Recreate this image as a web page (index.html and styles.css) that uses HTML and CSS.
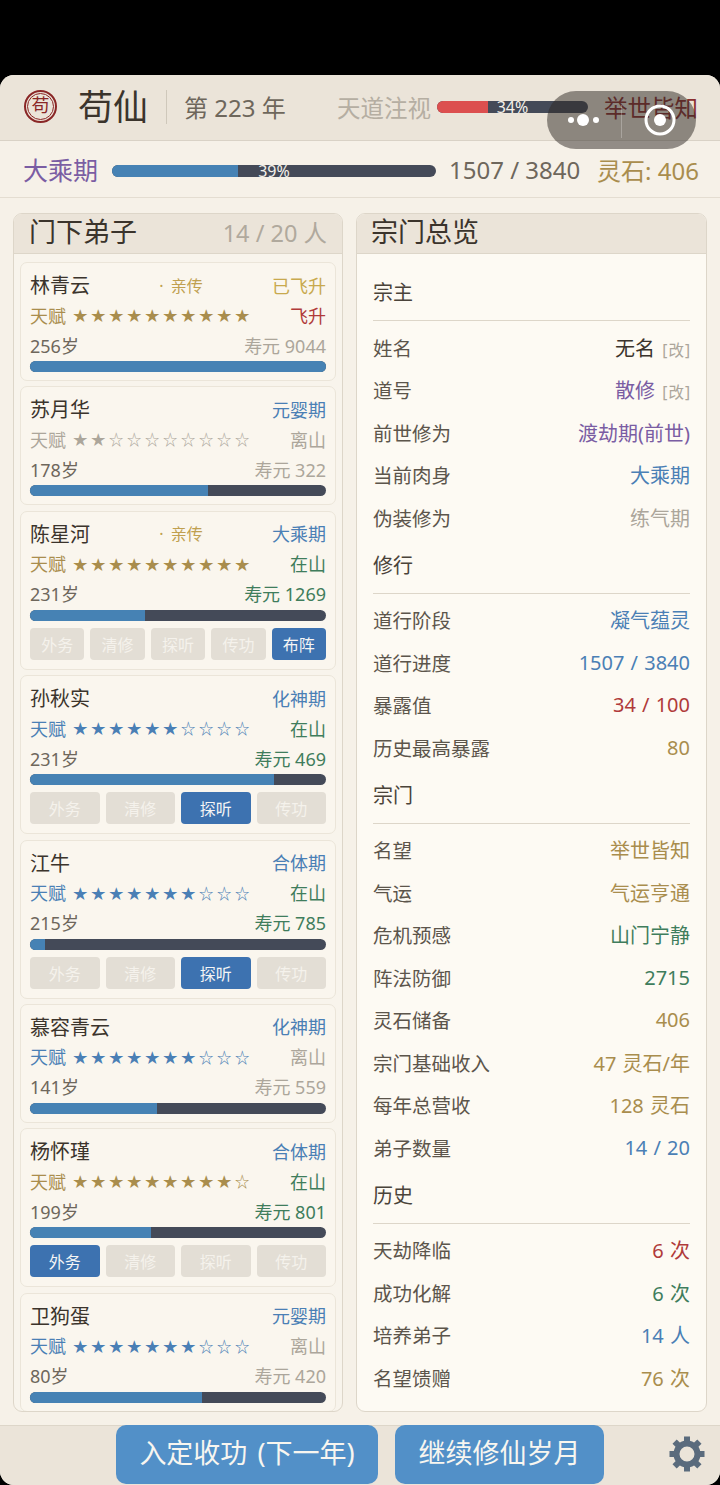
FILE: index.html
```html
<!DOCTYPE html>
<html lang="zh-CN">
<head>
  <meta charset="UTF-8" />
  <meta name="viewport" content="width=device-width, initial-scale=1" />
  <title>苟仙</title>
  <link rel="stylesheet" href="styles.css">
</head>
<body>
  <div class="app">
    <header class="topbar">
      <div class="seal"><span>苟</span></div>
      <div class="sect-name">苟仙</div>
      <div class="year">第 223 年</div>
      <div class="watch">天道注视</div>
      <div class="bar top-bar"><div class="fill red" style="width:34%"></div><span class="bar-text">34%</span></div>
      <div class="fame">举世皆知</div>
    </header>

    <section class="status">
      <div class="realm">大乘期</div>
      <div class="bar status-bar"><div class="fill" style="width:39%"></div><span class="bar-text">39%</span></div>
      <div class="exp">1507 / 3840</div>
      <div class="stones">灵石: 406</div>
    </section>

    <main class="columns">
      <section class="panel left-panel">
        <div class="panel-head">
          <h2>门下弟子</h2>
          <span class="count">14 / 20 人</span>
        </div>
        <div class="card-list">

          <div class="card">
            <div class="row name-row"><span class="name">林青云</span><span class="tag">· 亲传</span><span class="stage ascended">已飞升</span></div>
            <div class="row gift-row"><span class="gift gold">天赋<span class="stars">★★★★★★★★★★</span></span><span class="state red-text">飞升</span></div>
            <div class="row age-row"><span class="age">256岁</span><span class="life muted">寿元 9044</span></div>
            <div class="bar card-bar"><div class="fill full" style="width:100%"></div></div>
          </div>

          <div class="card">
            <div class="row name-row"><span class="name">苏月华</span><span class="stage">元婴期</span></div>
            <div class="row gift-row"><span class="gift grey">天赋<span class="stars">★★☆☆☆☆☆☆☆☆</span></span><span class="state muted">离山</span></div>
            <div class="row age-row"><span class="age">178岁</span><span class="life muted">寿元 322</span></div>
            <div class="bar card-bar"><div class="fill" style="width:60%"></div></div>
          </div>

          <div class="card">
            <div class="row name-row"><span class="name">陈星河</span><span class="tag">· 亲传</span><span class="stage">大乘期</span></div>
            <div class="row gift-row"><span class="gift gold">天赋<span class="stars">★★★★★★★★★★</span></span><span class="state green-text">在山</span></div>
            <div class="row age-row"><span class="age">231岁</span><span class="life green-text">寿元 1269</span></div>
            <div class="bar card-bar"><div class="fill" style="width:39%"></div></div>
            <div class="actions">
              <button class="btn">外务</button><button class="btn">清修</button><button class="btn">探听</button><button class="btn">传功</button><button class="btn on">布阵</button>
            </div>
          </div>

          <div class="card">
            <div class="row name-row"><span class="name">孙秋实</span><span class="stage">化神期</span></div>
            <div class="row gift-row"><span class="gift blue">天赋<span class="stars">★★★★★★☆☆☆☆</span></span><span class="state green-text">在山</span></div>
            <div class="row age-row"><span class="age">231岁</span><span class="life green-text">寿元 469</span></div>
            <div class="bar card-bar"><div class="fill" style="width:82.5%"></div></div>
            <div class="actions">
              <button class="btn">外务</button><button class="btn">清修</button><button class="btn on">探听</button><button class="btn">传功</button>
            </div>
          </div>

          <div class="card">
            <div class="row name-row"><span class="name">江牛</span><span class="stage">合体期</span></div>
            <div class="row gift-row"><span class="gift blue">天赋<span class="stars">★★★★★★★☆☆☆</span></span><span class="state green-text">在山</span></div>
            <div class="row age-row"><span class="age">215岁</span><span class="life green-text">寿元 785</span></div>
            <div class="bar card-bar"><div class="fill" style="width:5%"></div></div>
            <div class="actions">
              <button class="btn">外务</button><button class="btn">清修</button><button class="btn on">探听</button><button class="btn">传功</button>
            </div>
          </div>

          <div class="card">
            <div class="row name-row"><span class="name">慕容青云</span><span class="stage">化神期</span></div>
            <div class="row gift-row"><span class="gift blue">天赋<span class="stars">★★★★★★★☆☆☆</span></span><span class="state muted">离山</span></div>
            <div class="row age-row"><span class="age">141岁</span><span class="life muted">寿元 559</span></div>
            <div class="bar card-bar"><div class="fill" style="width:43%"></div></div>
          </div>

          <div class="card">
            <div class="row name-row"><span class="name">杨怀瑾</span><span class="stage">合体期</span></div>
            <div class="row gift-row"><span class="gift gold">天赋<span class="stars">★★★★★★★★★☆</span></span><span class="state green-text">在山</span></div>
            <div class="row age-row"><span class="age">199岁</span><span class="life green-text">寿元 801</span></div>
            <div class="bar card-bar"><div class="fill" style="width:41%"></div></div>
            <div class="actions">
              <button class="btn on">外务</button><button class="btn">清修</button><button class="btn">探听</button><button class="btn">传功</button>
            </div>
          </div>

          <div class="card">
            <div class="row name-row"><span class="name">卫狗蛋</span><span class="stage">元婴期</span></div>
            <div class="row gift-row"><span class="gift blue">天赋<span class="stars">★★★★★★★☆☆☆</span></span><span class="state muted">离山</span></div>
            <div class="row age-row"><span class="age">80岁</span><span class="life muted">寿元 420</span></div>
            <div class="bar card-bar"><div class="fill" style="width:58%"></div></div>
          </div>

        </div>
      </section>

      <section class="panel right-panel">
        <div class="panel-head">
          <h2>宗门总览</h2>
        </div>
        <div class="overview">
          <h3>宗主</h3>
          <div class="info"><span>姓名</span><span class="val dark">无名 <small>[改]</small></span></div>
          <div class="info"><span>道号</span><span class="val purple">散修 <small>[改]</small></span></div>
          <div class="info"><span>前世修为</span><span class="val purple">渡劫期(前世)</span></div>
          <div class="info"><span>当前肉身</span><span class="val blue">大乘期</span></div>
          <div class="info"><span>伪装修为</span><span class="val muted">练气期</span></div>

          <h3>修行</h3>
          <div class="info"><span>道行阶段</span><span class="val blue">凝气蕴灵</span></div>
          <div class="info"><span>道行进度</span><span class="val blue">1507 / 3840</span></div>
          <div class="info"><span>暴露值</span><span class="val red-text">34 / 100</span></div>
          <div class="info"><span>历史最高暴露</span><span class="val gold">80</span></div>

          <h3>宗门</h3>
          <div class="info"><span>名望</span><span class="val gold">举世皆知</span></div>
          <div class="info"><span>气运</span><span class="val gold">气运亨通</span></div>
          <div class="info"><span>危机预感</span><span class="val green-text">山门宁静</span></div>
          <div class="info"><span>阵法防御</span><span class="val green-text">2715</span></div>
          <div class="info"><span>灵石储备</span><span class="val gold">406</span></div>
          <div class="info"><span>宗门基础收入</span><span class="val gold">47 灵石/年</span></div>
          <div class="info"><span>每年总营收</span><span class="val gold">128 灵石</span></div>
          <div class="info"><span>弟子数量</span><span class="val blue">14 / 20</span></div>

          <h3>历史</h3>
          <div class="info"><span>天劫降临</span><span class="val red-text">6 次</span></div>
          <div class="info"><span>成功化解</span><span class="val green-text">6 次</span></div>
          <div class="info"><span>培养弟子</span><span class="val blue">14 人</span></div>
          <div class="info"><span>名望馈赠</span><span class="val gold">76 次</span></div>
        </div>
      </section>
    </main>

    <footer class="footer">
      <button class="main-btn btn-year">入定收功 (下一年)</button>
      <button class="main-btn btn-go">继续修仙岁月</button>
      <svg class="gear" width="38" height="38" viewBox="0 0 38 38" aria-hidden="true">
        <g stroke="#5a6b7d">
          <circle cx="19" cy="19" r="10.5" fill="none" stroke-width="6"/>
          <g stroke-width="6">
            <line x1="19" y1="1.5" x2="19" y2="8"/>
            <line x1="19" y1="30" x2="19" y2="36.5"/>
            <line x1="1.5" y1="19" x2="8" y2="19"/>
            <line x1="30" y1="19" x2="36.5" y2="19"/>
            <line x1="6.6" y1="6.6" x2="11.2" y2="11.2"/>
            <line x1="26.8" y1="26.8" x2="31.4" y2="31.4"/>
            <line x1="31.4" y1="6.6" x2="26.8" y2="11.2"/>
            <line x1="11.2" y1="26.8" x2="6.6" y2="31.4"/>
          </g>
        </g>
      </svg>
    </footer>

    <!-- host app capsule, sits over the header -->
    <div class="capsule">
      <svg width="149" height="58" viewBox="0 0 149 58" aria-hidden="true">
        <circle cx="24" cy="29" r="3" fill="#fff"/>
        <circle cx="36" cy="29" r="6" fill="#fff"/>
        <circle cx="49" cy="29" r="3" fill="#fff"/>
        <line x1="74.5" y1="14" x2="74.5" y2="47" stroke="#fff" stroke-opacity="0.25"/>
        <circle cx="113" cy="29" r="14" fill="none" stroke="#fff" stroke-width="3"/>
        <circle cx="113" cy="29" r="6" fill="#fff"/>
      </svg>
    </div>
  </div>
</body>
</html>
```

FILE: styles.css
```css
* {
  box-sizing: border-box;
}
body {
  margin: 0;
  padding-top: 75px;
  background: #000;
  font-family: "Noto Sans", "Noto Sans CJK SC", sans-serif;
  color: #3b342c;
}
.app {
  position: relative;
  height: 1410px;
  display: flex;
  flex-direction: column;
  background: #f6f1e8;
  border-radius: 14px;
  overflow: hidden;
}

/* header */
.topbar {
  height: 66px;
  display: flex;
  align-items: center;
  padding: 0 0 2px 24px;
  background: #ebe4d9;
  border-bottom: 1px solid #d9d2c6;
}
.seal {
  width: 33px;
  height: 33px;
  border: 2px solid #8a2626;
  border-radius: 50%;
  display: flex;
  align-items: center;
  justify-content: center;
  flex: none;
}
.seal span {
  width: 27px;
  height: 27px;
  border: 1px solid #8a2626;
  border-radius: 50%;
  font-size: 18px;
  line-height: 23px;
  text-align: center;
  color: #8a2626;
}
.sect-name {
  margin-left: 21px;
  padding-right: 18px;
  border-right: 1px solid #cfc8bb;
  font-size: 35px;
  line-height: 34px;
}
.year {
  margin-left: 17px;
  width: 153px;
  font-size: 24px;
  color: #6e675c;
  white-space: nowrap;
}
.watch {
  width: 100px;
  font-size: 23.5px;
  color: #b5aea2;
}
.top-bar {
  width: 151px;
  height: 12px;
  flex: none;
}
.fame {
  margin-left: 16px;
  font-size: 23.5px;
  color: #8a2e2e;
  white-space: nowrap;
}

/* shared bar */
.bar {
  position: relative;
  background: #444a58;
  border-radius: 6px;
}
.fill {
  height: 100%;
  background: #4682b4;
  border-radius: 6px 0 0 6px;
}
.fill.full {
  border-radius: 6px;
}
.fill.red {
  background: #dc4f4f;
}
.bar-text {
  position: absolute;
  left: 0;
  right: 0;
  top: 0;
  text-align: center;
  font-size: 16px;
  line-height: 12px;
  color: #f4f1ea;
}

/* status row */
.status {
  height: 57px;
  display: flex;
  align-items: center;
  padding-left: 23px;
  border-bottom: 1px solid #e4ddd1;
}
.realm {
  width: 89px;
  font-size: 25px;
  color: #7a5da3;
}
.status-bar {
  width: 324px;
  height: 12px;
  margin-top: 4px;
}
.exp {
  margin-left: 13px;
  width: 148px;
  font-size: 24px;
  color: #6e675c;
  white-space: nowrap;
}
.stones {
  font-size: 24px;
  color: #a98d4d;
  white-space: nowrap;
}

/* columns */
.columns {
  flex: 1;
  display: flex;
  gap: 13px;
  padding: 15px 13px 13px;
  min-height: 0;
}
.panel {
  border: 1px solid #ddd6c9;
  border-radius: 9px;
  overflow: hidden;
  display: flex;
  flex-direction: column;
}
.left-panel {
  width: 330px;
  background: #f8f4ec;
}
.right-panel {
  width: 351px;
  background: #fdfaf3;
}
.panel-head {
  height: 40px;
  flex: none;
  display: flex;
  align-items: center;
  justify-content: space-between;
  padding: 0 15px 3px 15px;
  background: #ebe4d9;
  border-bottom: 1px solid #ddd6c9;
}
.right-panel .panel-head {
  padding-left: 14px;
}
.panel-head h2 {
  margin: 0;
  font-size: 27px;
  font-weight: 400;
  line-height: 36px;
}
.count {
  font-size: 23.5px;
  color: #b0a99d;
}

/* disciple cards */
.card-list {
  padding: 8px 6px 0;
  display: flex;
  flex-direction: column;
  gap: 5.4px;
}
.card {
  flex: none;
  padding: 7px 9px 8px;
  background: #faf6ee;
  border: 1px solid #ebe5d9;
  border-radius: 7px;
}
.row {
  display: flex;
  justify-content: space-between;
  align-items: center;
  white-space: nowrap;
}
.name-row {
  height: 29px;
}
.gift-row {
  height: 31px;
}
.age-row {
  height: 29px;
  margin-bottom: 2px;
}
.name {
  font-size: 20px;
}
.tag {
  font-size: 16px;
  word-spacing: 3px;
  color: #c0a050;
}
.stage {
  font-size: 18px;
  color: #4a7fb5;
}
.stage.ascended {
  color: #c8a94e;
}
.gift {
  display: flex;
  align-items: center;
  font-size: 18px;
}
.stars {
  margin-left: 7px;
  font-size: 14.5px;
  letter-spacing: 3.5px;
}
.state,
.life,
.age {
  font-size: 18px;
}
.age {
  color: #6e675c;
}
.card-bar {
  height: 11px;
}
.actions {
  display: flex;
  gap: 6px;
  margin-top: 7px;
  margin-bottom: 1px;
}
.btn {
  flex: 1;
  height: 32px;
  padding: 0;
  border: 0;
  border-radius: 4px;
  background: #e3ded5;
  color: #f5f2ec;
  font-family: inherit;
  font-size: 16px;
}
.btn.on {
  background: #3d72b0;
  color: #f5f5f5;
}

/* colours */
.gold {
  color: #a98d4d;
}
.grey,
.muted {
  color: #aca69b;
}
.blue {
  color: #4a7fb5;
}
.purple {
  color: #7a5da3;
}
.dark {
  color: #3b342c;
}
.red-text {
  color: #b03a3a;
}
.green-text {
  color: #3f7d5c;
}

/* overview */
.overview {
  padding: 19px 16px 0;
}
.overview h3 {
  margin: 0 0 5px;
  height: 48px;
  border-bottom: 1px solid #ddd6c9;
  font-size: 20px;
  font-weight: 400;
  line-height: 40px;
  color: #4a433a;
}
.info + h3 {
  margin-top: 7px;
}
.info {
  height: 42.5px;
  display: flex;
  justify-content: space-between;
  align-items: center;
  font-size: 19.5px;
  color: #5c554b;
}
.val {
  font-size: 20px;
  word-spacing: 1px;
  white-space: nowrap;
}
.val small {
  font-size: 15.5px;
  letter-spacing: 1px;
  margin-left: 1px;
  margin-right: -1px;
  color: #aca69b;
}

/* footer */
.footer {
  height: 60px;
  flex: none;
  display: flex;
  align-items: flex-start;
  padding-left: 116px;
  background: #ebe4d9;
  border-top: 1px solid #ddd6c9;
}
.main-btn {
  height: 59px;
  margin-top: -1px;
  padding: 0 0 6px;
  border: 0;
  border-radius: 10px;
  background: #5290c8;
  color: #f8f6f0;
  font-family: inherit;
  font-size: 27px;
  word-spacing: 3px;
}
.btn-year {
  width: 262px;
}
.btn-go {
  width: 209px;
  margin-left: 17px;
}
.gear {
  margin: 9px 0 0 64px;
}

.capsule {
  position: absolute;
  left: 547px;
  top: 16px;
  width: 149px;
  height: 58px;
  border-radius: 29px;
  background: rgba(45, 40, 35, 0.5);
}
.capsule svg {
  display: block;
}
```
